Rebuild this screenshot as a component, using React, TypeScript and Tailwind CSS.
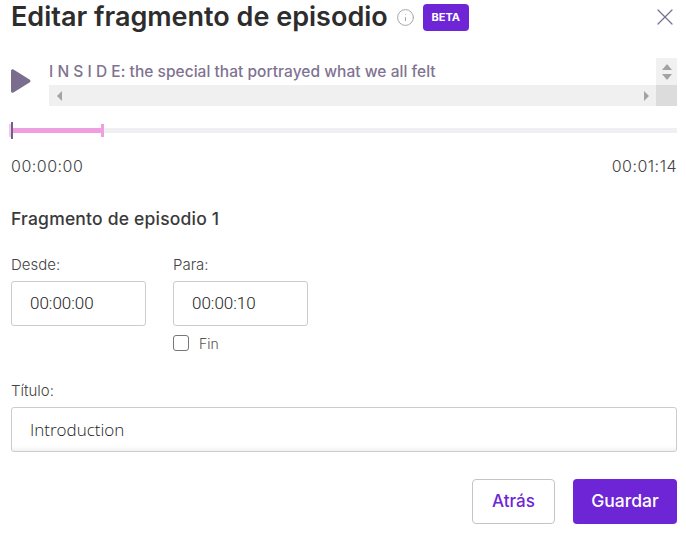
import React from 'react';
import { X, Info } from 'lucide-react';

const font = { fontFamily: 'Inter, Lato, sans-serif' };

const Arrow = ({ dir }: { dir: 'up' | 'down' | 'left' | 'right' }) => {
  const points = {
    up: '1,8 11,8 6,2',
    down: '1,2 11,2 6,8',
    left: '8,0 8,10 3,5',
    right: '3,0 3,10 8,5',
  }[dir];
  return (
    <svg width={dir === 'up' || dir === 'down' ? 12 : 10} height={10} viewBox={dir === 'up' || dir === 'down' ? '0 0 12 10' : '0 0 10 10'}>
      <polygon points={points} fill="#a3a3a3" />
    </svg>
  );
};

const TimeField = ({ label, value }: { label: string; value: string }) => (
  <div className="w-[135px]">
    <div className="text-[15px] leading-5 font-light text-[#444]">{label}</div>
    <div className="mt-[6px] h-[45px] border border-[#ccc] rounded-[3px] pl-[18px] flex items-center text-[17px] font-light text-[#222] font-['Roboto']">
      {value}
    </div>
  </div>
);

export default function App() {
  return (
    <div className="w-[686px] h-[533px] bg-white overflow-hidden pl-[11px] pr-[9px] pt-[3px]" style={font}>
      <div className="flex items-center h-[28px]">
        <h1 className="text-[27px] leading-[28px] font-semibold text-[#2d2d2d] whitespace-nowrap">Editar fragmento de episodio</h1>
        <Info className="ml-[8px] w-[19px] h-[19px] text-[#999]" strokeWidth={1.1} />
        <span className="ml-[8px] w-[46px] h-[27px] rounded-[4px] bg-[#6d25d6] text-white text-[11px] font-bold flex items-center justify-center">BETA</span>
        <X className="ml-auto mr-[-2px] w-[28px] h-[28px] text-[#7b7090]" strokeWidth={1.1} />
      </div>

      <div className="flex mt-[27px] h-[48px]">
        <svg className="w-[22px] h-[26px] mt-[10px] ml-[-1px] shrink-0" viewBox="0 0 22 26">
          <path d="M1 3 Q1 0.5 3.5 1.5 L19.5 11.5 Q21.5 13 19.5 14.5 L3.5 24.5 Q1 25.5 1 23 Z" fill="#7b6d8d" />
        </svg>
        <div className="ml-[17px] flex-1 min-w-0 flex flex-col">
          <div className="flex flex-1">
            <div className="flex-1 text-[15.5px] leading-[27px] font-medium tracking-[0.03px] text-[#7f7391] whitespace-nowrap">I N S I D E: the special that portrayed what we all felt</div>
            <div className="w-[21px] bg-[#f1f1f1] flex flex-col items-center justify-center">
              <Arrow dir="up" />
              <Arrow dir="down" />
            </div>
          </div>
          <div className="flex h-[21px]">
            <div className="flex-1 bg-[#f0f0f0] flex items-center justify-between px-[5px]">
              <Arrow dir="left" />
              <Arrow dir="right" />
            </div>
            <div className="w-[21px] bg-[#dcdcdc]" />
          </div>
        </div>
      </div>

      <div className="relative mt-[22px] h-[5px] bg-[#f0f0f2]">
        <div className="absolute left-0 top-0 w-[91px] h-[5px] bg-[#ef9fe0]" />
        <div className="absolute left-[-2px] top-[-4px] w-[3px] h-[13px] bg-[#f7c8ef]" />
        <div className="absolute left-[90px] top-[-4px] w-[3px] h-[13px] bg-[#ef9fe0]" />
        <div className="absolute left-0 top-[-6px] w-[2px] h-[17px] bg-[#6f6383]" />
      </div>

      <div className="flex justify-between mt-[23px] text-[16px] leading-5 font-light tracking-[0.5px] text-[#444]">
        <span>00:00:00</span>
        <span>00:01:14</span>
      </div>

      <h2 className="mt-[31px] text-[17.5px] leading-6 font-medium tracking-[0.2px] text-[#3a3a3a]">Fragmento de episodio 1</h2>

      <div className="flex gap-[27px] mt-[24px]">
        <TimeField label="Desde:" value="00:00:00" />
        <div>
          <TimeField label="Para:" value="00:00:10" />
          <label className="flex items-center mt-[8px] h-[18px]">
            <span className="w-[16px] h-[16px] border border-[#777] rounded-[3px] bg-white" />
            <span className="ml-[10px] text-[14px] font-light text-[#555]">Fin</span>
          </label>
        </div>
      </div>

      <div className="mt-[29px] text-[15px] leading-5 font-light text-[#444]">Título:</div>
      <div className="mt-[6px] h-[45px] border border-[#ccc] rounded-[3px] pl-[18px] flex items-center text-[17px] font-light text-[#222] font-['Open_Sans'] shadow-[inset_0_-6px_6px_-6px_rgba(0,0,0,0.12)]">
        Introduction
      </div>

      <div className="flex justify-end gap-[18px] mt-[27px]">
        <button className="w-[83px] h-[45px] border border-[#c4c4c8] rounded-[4px] bg-white text-[#6d25d6] text-[17px] font-medium">Atrás</button>
        <button className="w-[104px] h-[45px] rounded-[4px] bg-[#6d25d6] text-white text-[17.5px] font-medium">Guardar</button>
      </div>
    </div>
  );
}
